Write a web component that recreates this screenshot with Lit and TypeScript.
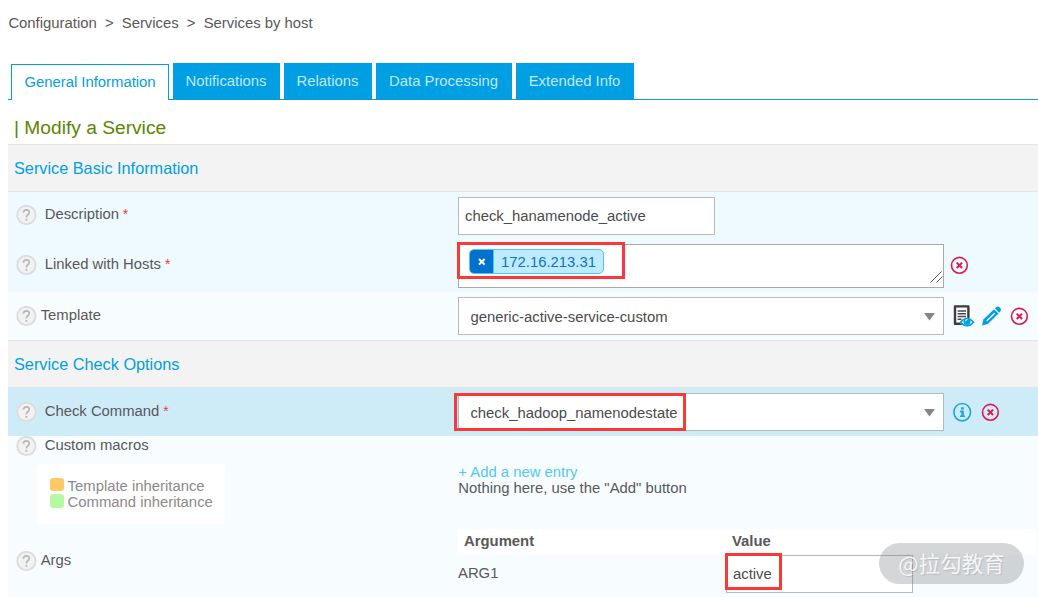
import { LitElement, html, css } from "lit";
import { customElement, property } from "lit/decorators.js";

const removeIcon = html`<svg class="ic remove" width="19" height="18" viewBox="0 0 19 18">
  <circle cx="9.4" cy="9.3" r="7.9" fill="none" stroke="#e0194c" stroke-width="1.6"></circle>
  <path d="M6.7 6.6l5.4 5.4M12.1 6.6l-5.4 5.4" stroke="#e0194c" stroke-width="2"></path>
</svg>`;

const infoIcon = html`<svg class="ic" width="19" height="20" viewBox="0 0 19 20">
  <ellipse cx="9.2" cy="10.2" rx="8.3" ry="8.7" fill="none" stroke="#1ba6e2" stroke-width="1.6"></ellipse>
  <path d="M8 5.2h2.8v2.3H8zM7 8.6h3.8v4.9H12v1.6H7v-1.6h1.3v-3.3H7z" fill="#1ba6e2"></path>
</svg>`;

const viewIcon = html`<svg class="ic" width="22" height="23" viewBox="0 0 22 23">
  <path d="M2 1.4h13.4v17.4H2z" fill="#fff" stroke="#3b3b40" stroke-width="2.4" stroke-linejoin="round"></path>
  <path d="M4.6 6h8.4M4.6 8.8h8.4M4.6 11.5h8.4M4.6 14.2h4" stroke="#4a4a4f" stroke-width="1.4"></path>
  <path d="M6.4 17.2Q13.9 8.4 21.4 17.2Q13.9 25.4 6.4 17.2z" fill="#f7fdff"></path>
  <path d="M7.5 17.2Q14 9.8 20.5 17.2Q14 24.4 7.5 17.2z" fill="#fff" stroke="#00a0e3" stroke-width="1.6"></path>
  <circle cx="14" cy="16.6" r="3.5" fill="#00a0e3"></circle>
  <path d="M12.6 16.2q.2-1.6 1.9-1.7" fill="none" stroke="#fff" stroke-width="1.1"></path>
</svg>`;

const editIcon = html`<svg class="ic" width="20" height="20" viewBox="0 0 20 20">
  <path d="M0 19.4L1.4 13.4 12.1 3.2 16.5 7.6 5.8 18z" fill="#009fe3"></path>
  <path d="M13 2.4l1.4-1.3q1.5-1.1 3 .1l1 1q1.3 1.5.2 2.9l-1.4 1.6z" fill="#009fe3"></path>
  <path d="M4.6 15L12.6 7.2" stroke="#fff" stroke-width="1.3"></path>
</svg>`;

@customElement("help-mark")
class HelpMark extends LitElement {
  static styles = css`
    :host { display: block; width: 21px; height: 21px; flex: none; }
    svg { display: block; }
  `;
  render() {
    return html`<svg width="21" height="21" viewBox="0 0 21 21">
      <circle cx="10.4" cy="10" r="9.2" fill="#f2f2f2" stroke="#dcdcdc" stroke-width="1.8"></circle>
      <path d="M7.4 7.7Q7.5 5 10.4 4.9Q13.3 5 13.2 7.6Q13.1 9 11.5 10Q10.4 10.7 10.4 12.4" fill="none" stroke="#b8b8b8" stroke-width="1.7"></path>
      <path d="M9.5 13.9h1.9v1.8H9.5z" fill="#b8b8b8"></path>
    </svg>`;
  }
}

@customElement("field-label")
class FieldLabel extends LitElement {
  @property() text = "";
  @property({ type: Boolean }) required = false;
  @property({ type: Boolean }) tight = false;
  static styles = css`
    :host { display: block; }
    .label { display: flex; padding-left: 8px; gap: 7.7px; }
    .tight { gap: 3.7px; }
    .text { line-height: 18px; white-space: pre; }
    .star { color: #f33; font-size: 14px; }
  `;
  render() {
    return html`<div class="label ${this.tight ? "tight" : ""}">
      <help-mark></help-mark>
      <span class="text">${this.text}${this.required ? html`<span class="star"> *</span>` : ""}</span>
    </div>`;
  }
}

@customElement("app-root")
class AppRoot extends LitElement {
  static styles = css`
    :host {
      display: block; height: 597px; overflow: hidden; background: #fff; color: #58585a;
      font-family: "Liberation Sans", Arial, sans-serif; font-size: 14.85px; line-height: 18px;
      position: relative;
    }
    * { box-sizing: border-box; }
    .crumbs { padding: 14px 0 0 8.4px; height: 63px; display: flex; gap: 8.2px; }
    .body { margin-left: 8px; }
    .tabs { display: flex; height: 37px; gap: 4px; padding-left: 3px; border-bottom: 1px solid #0c9ad8; }
    .tab { height: 36px; background: #009fe3; color: #bfe9fb; text-align: center; padding: 9px 1px 0 0; }
    .t0 { width: 158px; height: 36px; margin-top: 1px; padding: 8px 0 0; border: 1px solid #009fe3; border-bottom: 0; background: #fff; color: #009fe3; }
    .t1 { width: 107px; } .t2 { width: 88px; } .t3 { width: 136px; } .t4 { width: 118px; }
    .title { height: 44px; padding: 16px 0 0 6px; font-size: 19.2px; line-height: 23px; color: #5c8500; }
    .section { height: 48px; border-top: 1px solid #e3e3e3; border-bottom: 1px solid #e3e3e3; background: #f3f3f3;
      padding: 14px 0 0 6px; font-size: 16.27px; line-height: 19px; color: #009fe3; }
    .row { display: grid; grid-template-columns: 450px 1fr; background: #f7fdff; }
    .desc { height: 50px; background: #eefaff; }
    .hosts { height: 50px; background: #eefaff; }
    .tpl { height: 48px; }
    .cmd { height: 48px; background: #ceecf8; }
    .macros { height: 93px; }
    .args { height: 68px; }
    .desc field-label { padding-top: 13px; }
    .hosts field-label { padding-top: 13px; }
    .tpl field-label { padding-top: 14px; }
    .cmd field-label { padding-top: 14px; }
    .args field-label { padding-top: 22px; }
    .control { display: flex; align-items: flex-start; }
    .desc .control, .tpl .control, .cmd .control { padding-top: 5px; }
    .hosts .control { padding-top: 2px; }
    .box { border: 1px solid #b9b9bb; background: #fff; height: 38px; display: flex; align-items: center; color: #4b4b4d; }
    .text { width: 257px; padding-left: 6px; }
    .select { width: 486px; padding: 2px 8px 0 11.4px; justify-content: space-between; }
    .area { width: 486px; height: 44px; align-items: flex-start; padding: 4px 0 0 10px; justify-content: space-between; border-color: #a9a9a9; }
    .grip { align-self: flex-end; }
    .chip { display: flex; width: 135px; height: 25px; border: 1px solid #4ec8fb; border-radius: 5px; overflow: hidden; background: #bfebff; color: #0d72cd; line-height: 24px; }
    .x { width: 24px; flex: none; background: #0072ce; display: grid; place-items: center; border-right: 1px solid #4ec8fb; }
    .val { padding-left: 7px; }
    .icons { display: flex; align-items: center; padding-left: 9px; height: 38px; }
    .i1 { height: 42px; padding-left: 6px; }
    .i2 { gap: 9px; }
    .i3 { gap: 7px; }
    .i3 .remove { margin-left: 1px; }
    .ic { display: block; flex: none; }
    .legend { width: 188px; height: 60px; margin: 7px 0 0 29px; padding: 14px 0 0 13px; background: #fff; border-radius: 5px; color: #8a8a8c; line-height: 16px; }
    .item { display: flex; gap: 3.6px; height: 16px; }
    .item i { width: 14px; height: 13px; border-radius: 3px; }
    .orange { background: #ffc966; }
    .item .green { height: 14px; background: #b5faa3; }
    .entry { padding: 28px 0 0 .3px; line-height: 16px; }
    .add { color: #4ec8fb; }
    .table { display: grid; grid-template-columns: 268px 1fr; grid-template-rows: 25px 39px; margin-right: 2px; }
    .th { background: #fff; font-weight: bold; padding: 3px 0 0 6px; }
    .td { padding-top: 10px; }
    .arg { width: 187px; padding-left: 6px; margin-top: 1px; }
    .mark { position: absolute; border: 3px solid #fc3737; }
    .m1 { left: 457px; top: 242px; width: 168px; height: 37px; }
    .m2 { left: 454px; top: 393px; width: 232px; height: 38px; }
    .m3 { left: 725px; top: 553px; width: 57px; height: 37px; }
    .stamp { position: absolute; left: 879px; top: 543px; width: 145px; height: 41px; border-radius: 21px;
      background: rgba(100, 105, 108, .27); color: rgba(255,255,255,.85); display: flex; justify-content: center; padding-top: 5px;
      font-family: "Noto Sans CJK SC", sans-serif; font-size: 21.5px; line-height: 30px; white-space: nowrap;
      text-shadow: 1px 1px 1px rgba(120,120,120,.25); }
  `;
  render() {
    const caret = html`<svg width="11" height="8" viewBox="0 0 11 8"><path d="M0 0h11L5.5 7.5z" fill="#858585"></path></svg>`;
    const tabs = ["General Information", "Notifications", "Relations", "Data Processing", "Extended Info"];
    return html`
      <nav class="crumbs"><span>Configuration</span><span>&gt;</span><span>Services</span><span>&gt;</span><span>Services by host</span></nav>
      <div class="body">
        <div class="tabs">${tabs.map((t, i) => html`<div class="tab t${i}">${t}</div>`)}</div>
        <div class="title">| Modify a Service</div>
        <div class="section">Service Basic Information</div>
        <div class="row desc">
          <field-label text="Description" required></field-label>
          <div class="control"><div class="box text">check_hanamenode_active</div></div>
        </div>
        <div class="row hosts">
          <field-label text="Linked with Hosts" required></field-label>
          <div class="control">
            <div class="box area">
              <div class="chip"><span class="x"><svg width="8" height="8" viewBox="0 0 8 8"><path d="M1 1l5.6 5.6M6.6 1L1 6.6" stroke="#fff" stroke-width="2"></path></svg></span><span class="val">172.16.213.31</span></div>
              <svg class="grip" width="13" height="16" viewBox="0 0 13 16"><path d="M.5 11.5l11-11M6.5 11.5l6-6" stroke="#555" stroke-width="1"></path></svg>
            </div>
            <div class="icons i1">${removeIcon}</div>
          </div>
        </div>
        <div class="row tpl">
          <field-label text="Template" tight></field-label>
          <div class="control">
            <div class="box select"><span>generic-active-service-custom</span>${caret}</div>
            <div class="icons i3">${viewIcon}${editIcon}${removeIcon}</div>
          </div>
        </div>
        <div class="section">Service Check Options</div>
        <div class="row cmd">
          <field-label text="Check Command" required></field-label>
          <div class="control">
            <div class="box select"><span>check_hadoop_namenodestate</span>${caret}</div>
            <div class="icons i2">${infoIcon}${removeIcon}</div>
          </div>
        </div>
        <div class="row macros">
          <div>
            <field-label text="Custom macros"></field-label>
            <div class="legend">
              <div class="item"><i class="orange"></i><span>Template inheritance</span></div>
              <div class="item"><i class="green"></i><span>Command inheritance</span></div>
            </div>
          </div>
          <div class="entry"><div class="add">+ Add a new entry</div><div>Nothing here, use the "Add" button</div></div>
        </div>
        <div class="row args">
          <field-label text="Args" tight></field-label>
          <div class="table">
            <div class="th">Argument</div><div class="th">Value</div>
            <div class="td">ARG1</div><div class="box arg">active</div>
          </div>
        </div>
      </div>
      <div class="mark m1"></div><div class="mark m2"></div><div class="mark m3"></div>
      <div class="stamp">@拉勾教育</div>
    `;
  }
}
